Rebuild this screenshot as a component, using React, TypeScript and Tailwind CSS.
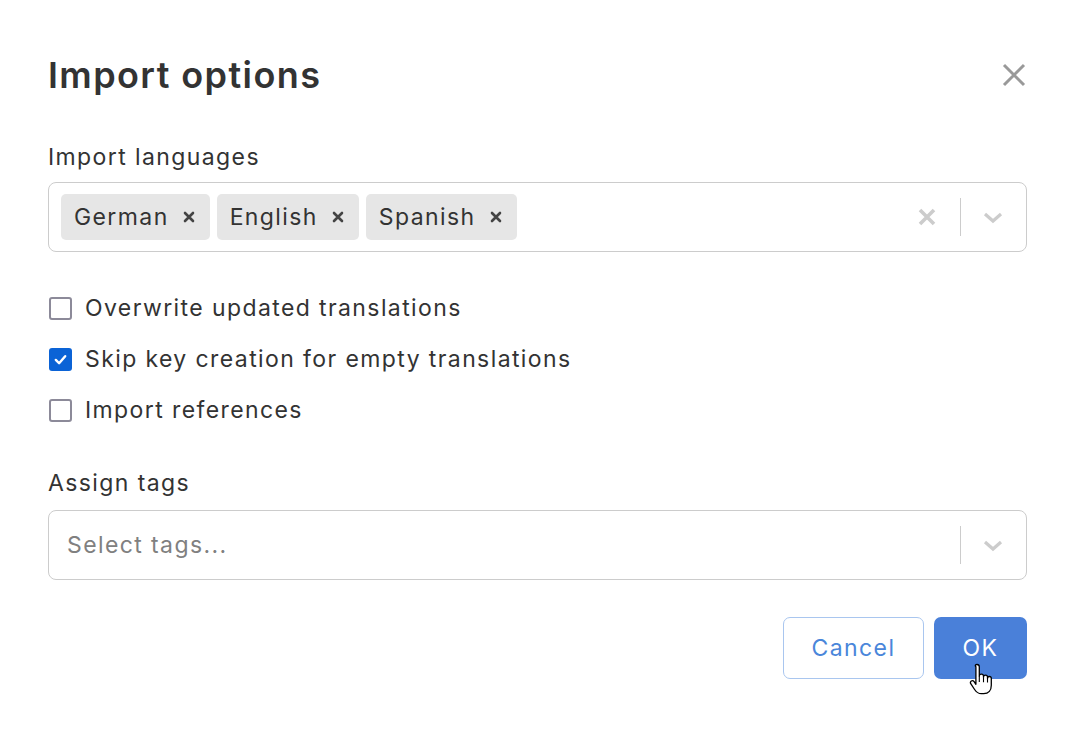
import React from "react";

const FONT = { fontFamily: "Inter, 'Noto Sans', sans-serif" };

function ChipX() {
  return (
    <svg width="12" height="12" viewBox="0 0 12 12" className="ml-[14px]">
      <path d="M2 2L10 10M10 2L2 10" stroke="#444" strokeWidth="2.6" strokeLinecap="round" />
    </svg>
  );
}

function Chip({ label }: { label: string }) {
  return (
    <div className="flex items-center h-[46px] pl-[13px] pr-[15px] bg-[#e6e6e6] rounded-[5px] text-[23px] text-[#333] tracking-[1.4px]">
      <span>{label}</span>
      <ChipX />
    </div>
  );
}

function Indicators({ clearable }: { clearable?: boolean }) {
  return (
    <div className="flex items-center h-full">
      {clearable && (
        <svg width="20" height="20" viewBox="0 0 20 20" className="mr-[23px]">
          <path d="M3 3L17 17M17 3L3 17" stroke="#ccc" strokeWidth="3.6" />
        </svg>
      )}
      <div className="w-px h-[38px] bg-[#ccc]" />
      <svg width="22" height="14" viewBox="0 0 22 14" className="ml-[21px] mr-[22px]">
        <path d="M3 4L11 11L19 4" stroke="#ccc" strokeWidth="3.2" fill="none" />
      </svg>
    </div>
  );
}

function Checkbox({ checked, label }: { checked?: boolean; label: string }) {
  return (
    <label className="flex items-center h-[30px] gap-[13px]">
      {checked ? (
        <span className="w-[23px] h-[23px] rounded-[3px] bg-[#0b63d6] flex items-center justify-center ml-px">
          <svg width="15" height="15" viewBox="0 0 16 16">
            <path d="M3 8.5L6.5 12L13 4.5" stroke="#fff" strokeWidth="2.6" fill="none" strokeLinecap="round" strokeLinejoin="round" />
          </svg>
        </span>
      ) : (
        <span className="w-[23px] h-[23px] rounded-[3px] border-[2.5px] border-[#8c8a99] bg-white ml-px" />
      )}
      <span className="text-[23px] text-[#333] tracking-[1.4px]">{label}</span>
    </label>
  );
}

function HandCursor() {
  return (
    <svg width="26" height="36" viewBox="0 0 26 36" className="absolute left-[35px] top-[45px]">
      <path
        d="M8 2.5c1.4 0 2.3 1 2.3 2.3v9.3c0-1.3.9-2 2.1-2s2.1.9 2.1 2.1v1c0-1.2.9-2 2-2s2 .9 2 2v1.2c0-1.1.8-1.9 1.9-1.9s1.9.9 1.9 2.1v6.7c0 4.8-2.7 8.4-7.6 8.4h-2.3c-3.3 0-5.1-1.6-6.8-4.2l-3.7-5.6c-.7-1.1-.5-2.3.4-2.9.9-.6 2.1-.3 2.8.7l1.8 2.6V4.8C5.7 3.5 6.6 2.5 8 2.5z"
        fill="#fff"
        stroke="#000"
        strokeWidth="1.3"
        strokeLinejoin="round"
      />
      <path d="M10.3 14v6M14.5 15.2v5M18.5 16.4v4" stroke="#000" strokeWidth="1.1" />
    </svg>
  );
}

export default function App() {
  return (
    <div className="w-[1081px] h-[731px] bg-white pl-[48px] pr-[54px] pt-[55px]" style={FONT}>
      <div className="flex items-center justify-between h-[40px]">
        <h1 className="text-[36px] font-semibold text-[#333] tracking-[1.4px]">Import options</h1>
        <svg width="24" height="24" viewBox="0 0 24 24" className="mr-[1px]">
          <path d="M2 2L22 22M22 2L2 22" stroke="#999" strokeWidth="3" />
        </svg>
      </div>

      <div className="mt-[47px] h-[30px] flex items-center text-[23px] text-[#333] tracking-[1.4px]">
        Import languages
      </div>
      <div className="mt-[10px] h-[70px] border border-[#ccc] rounded-[8px] flex items-center justify-between">
        <div className="flex items-center gap-[7px] pl-[12px]">
          <Chip label="German" />
          <Chip label="English" />
          <Chip label="Spanish" />
        </div>
        <Indicators clearable />
      </div>

      <div className="mt-[41px] flex flex-col gap-[21px]">
        <Checkbox label="Overwrite updated translations" />
        <Checkbox checked label="Skip key creation for empty translations" />
        <Checkbox label="Import references" />
      </div>

      <div className="mt-[43px] h-[30px] flex items-center text-[23px] text-[#333] tracking-[1.4px]">
        Assign tags
      </div>
      <div className="mt-[12px] h-[70px] border border-[#ccc] rounded-[8px] flex items-center justify-between">
        <span className="pl-[18px] text-[23px] text-[#808080] tracking-[1.4px]">Select tags...</span>
        <Indicators />
      </div>

      <div className="mt-[37px] flex justify-end gap-[10px]">
        <button className="h-[62px] w-[141px] rounded-[7px] border border-[#a9c6ef] bg-white text-[23px] text-[#4a86da] tracking-[1.4px]">
          Cancel
        </button>
        <div className="relative">
          <button className="h-[62px] w-[93px] rounded-[7px] bg-[#4a80d9] text-[23px] text-white tracking-[1.4px]">
            OK
          </button>
          <HandCursor />
        </div>
      </div>
    </div>
  );
}
